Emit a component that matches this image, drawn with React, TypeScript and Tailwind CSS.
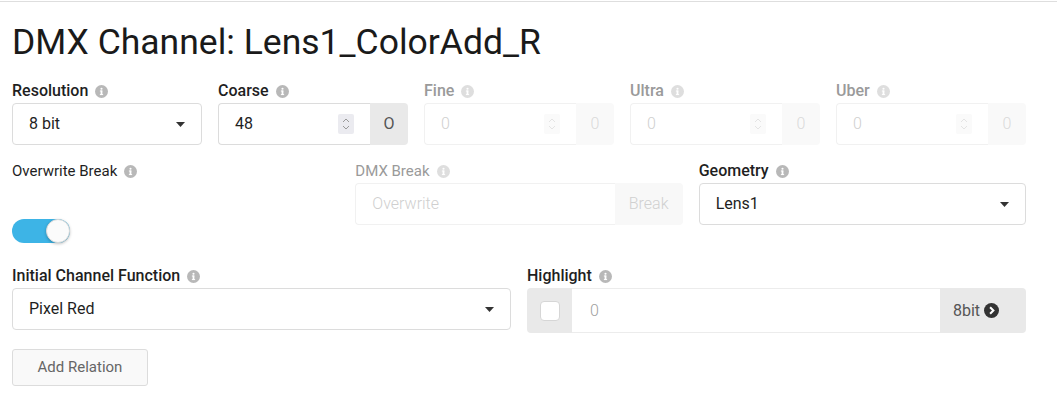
import React from "react";

function Info({ color = "#b8b8b8" }: { color?: string }) {
  return (
    <svg width="13" height="13" viewBox="0 0 16 16" className="ml-[7px] shrink-0">
      <circle cx="8" cy="8" r="8" fill={color} />
      <rect x="6.9" y="6.8" width="2.2" height="5.4" fill="#fff" />
      <rect x="6" y="6.8" width="3" height="1.2" fill="#fff" />
      <rect x="6" y="11.2" width="4" height="1.2" fill="#fff" />
      <circle cx="8" cy="4.6" r="1.3" fill="#fff" />
    </svg>
  );
}

function Caret() {
  return (
    <svg width="9" height="5" viewBox="0 0 9 5">
      <path d="M0 0 L9 0 L4.5 5 Z" fill="#333" />
    </svg>
  );
}

function Spinner({ faded = false }: { faded?: boolean }) {
  return (
    <div
      className={
        faded
          ? "w-[16px] h-[20px] rounded-[2px] bg-[#fafafa] flex items-center justify-center"
          : "w-[16px] h-[20px] rounded-[2px] bg-[#ebebf0] flex items-center justify-center"
      }
    >
      <svg width="8" height="14" viewBox="0 0 8 14">
        <path
          d="M1 5 L4 2 L7 5 M1 9 L4 12 L7 9"
          fill="none"
          stroke={faded ? "#e4e4e4" : "#9a9a9a"}
          strokeWidth="1"
        />
      </svg>
    </div>
  );
}

function Label({
  text,
  faded = false,
  regular = false,
}: {
  text: string;
  faded?: boolean;
  regular?: boolean;
}) {
  return (
    <div
      className={
        "flex items-center h-[20px] mb-[2px] " +
        (regular ? "font-normal text-[15px] " : "font-medium text-[16px] ") +
        (faded ? "text-[#9a9a9a]" : "text-[#1f1f1f]")
      }
    >
      <span>{text}</span>
      <Info color={faded ? "#dedede" : "#b8b8b8"} />
    </div>
  );
}

function Select({ value }: { value: string }) {
  return (
    <div className="h-[42px] border border-[#dcdcdc] rounded-[4px] bg-white flex items-center justify-between pl-[16px] pr-[16px] text-[16px] text-[#1f1f1f]">
      <span>{value}</span>
      <Caret />
    </div>
  );
}

function NumberGroup({
  value,
  addon,
  faded = false,
}: {
  value: string;
  addon: string;
  faded?: boolean;
}) {
  return (
    <div className="flex h-[42px] text-[16px]">
      <div
        className={
          "flex-1 flex items-center justify-between border border-r-0 rounded-l-[4px] bg-white pl-[16px] pr-[16px] " +
          (faded ? "border-[#f1f1f1] text-[#cfcfcf] font-light" : "border-[#dcdcdc] text-[#1f1f1f]")
        }
      >
        <span>{value}</span>
        <Spinner faded={faded} />
      </div>
      <div
        className={
          "w-[38px] rounded-r-[4px] flex items-center justify-center " +
          (faded ? "bg-[#f9f9f9] text-[#dadada] font-light" : "bg-[#e9e9e9] text-[#555]")
        }
      >
        {addon}
      </div>
    </div>
  );
}

export default function App() {
  return (
    <div className="min-h-[401px] bg-white font-[Roboto,'Liberation_Sans',sans-serif]">
      <div className="mt-px border-t border-[#dedede] pl-[12px] pr-[31px]">
        <h1 className="mt-[19px] text-[35.5px] leading-[43px] font-normal text-[#1a1a1a]">
          DMX Channel: Lens1_ColorAdd_R
        </h1>

        <div className="mt-[17px] grid grid-cols-5 gap-4">
          <div>
            <Label text="Resolution" />
            <Select value="8 bit" />
          </div>
          <div>
            <Label text="Coarse" />
            <NumberGroup value="48" addon="O" />
          </div>
          <div>
            <Label text="Fine" faded />
            <NumberGroup value="0" addon="0" faded />
          </div>
          <div>
            <Label text="Ultra" faded />
            <NumberGroup value="0" addon="0" faded />
          </div>
          <div>
            <Label text="Uber" faded />
            <NumberGroup value="0" addon="0" faded />
          </div>
        </div>

        <div className="mt-[16px] grid grid-cols-3 gap-4 items-start">
          <div>
            <Label text="Overwrite Break" regular />
            <div className="mt-[38px] relative w-[58px] h-[24px] rounded-full bg-[#3db4e6]">
              <div className="absolute right-0 top-0 w-[24px] h-[24px] rounded-full bg-[#fbfbfb] border border-[#dadada] shadow-[0_1px_3px_rgba(0,0,0,0.25)]" />
            </div>
          </div>
          <div>
            <Label text="DMX Break" faded regular />
            <div className="flex h-[42px] text-[16px] font-light">
              <div className="flex-1 flex items-center border border-r-0 border-[#f1f1f1] rounded-l-[4px] pl-[16px] text-[#cfcfcf]">
                Overwrite
              </div>
              <div className="w-[68px] rounded-r-[4px] bg-[#f8f8f8] flex items-center justify-center text-[#d0d0d0]">
                Break
              </div>
            </div>
          </div>
          <div>
            <Label text="Geometry" />
            <Select value="Lens1" />
          </div>
        </div>

        <div className="mt-[23px] grid grid-cols-2 gap-4 items-start">
          <div>
            <Label text="Initial Channel Function" />
            <Select value="Pixel Red" />
          </div>
          <div>
            <Label text="Highlight" />
            <div className="flex h-[45px] text-[16px]">
              <div className="w-[45px] bg-[#e9e9e9] rounded-l-[4px] flex items-center justify-center">
                <div className="w-[20px] h-[20px] rounded-[4px] bg-white border border-[#d6d6d6]" />
              </div>
              <div className="flex-1 flex items-center bg-white border-y border-[#ececec] pl-[18px] text-[#a0a0a0] font-light">
                0
              </div>
              <div className="w-[86px] bg-[#e9e9e9] rounded-r-[4px] flex items-center pl-[13px] text-[16px] text-[#555]">
                <span>8bit</span>
                <svg width="15" height="15" viewBox="0 0 16 16" className="ml-[4px]">
                  <circle cx="8" cy="8" r="8" fill="#333" />
                  <path d="M6.5 4.5 L10 8 L6.5 11.5" fill="none" stroke="#fff" strokeWidth="2.2" />
                </svg>
              </div>
            </div>
          </div>
        </div>

        <button className="mt-[16px] h-[37px] w-[136px] border border-[#dcdcdc] rounded-[3px] bg-[#f9f9f9] text-[15px] text-[#666]">
          Add Relation
        </button>
      </div>
    </div>
  );
}
